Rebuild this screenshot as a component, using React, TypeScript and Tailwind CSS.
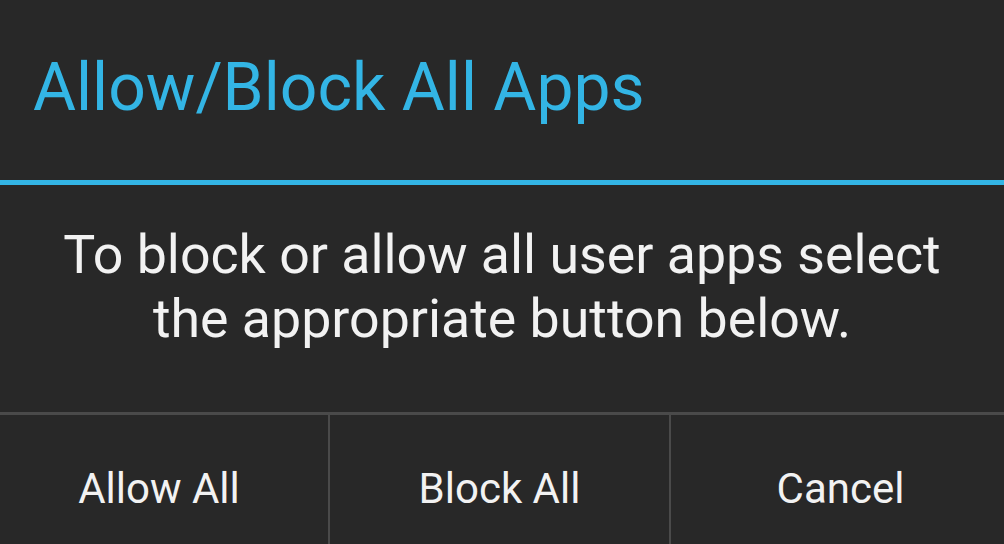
export default function App() {
  return (
    <div
      className="flex h-[544px] w-[1004px] flex-col overflow-hidden bg-[#282828]"
      style={{ fontFamily: "Roboto, 'Liberation Sans', sans-serif" }}
    >
      <div className="h-[180px] px-[33px] pt-[55px]">
        <h1 className="text-[66px] leading-none text-[#33b5e5]">Allow/Block All Apps</h1>
      </div>
      <div className="h-[5px] bg-[#33b5e5]" />
      <div className="h-[227px] px-10 pt-[38px]">
        <p className="text-center text-[53.7px] leading-[64px] text-[#f2f2f2]">
          To block or allow all user apps select the appropriate button below.
        </p>
      </div>
      <div className="h-[3px] bg-[#4a4a4a]" />
      <div className="grid flex-1 grid-cols-[328px_2px_339px_2px_1fr]">
        <button className="self-start pr-[10px] pt-[53px] text-[42px] leading-none text-[#f2f2f2]">Allow All</button>
        <div className="bg-[#4a4a4a]" />
        <button className="self-start pt-[53px] text-[42px] leading-none text-[#f2f2f2]">Block All</button>
        <div className="bg-[#4a4a4a]" />
        <button className="self-start pl-[6px] pt-[53px] text-[42px] leading-none text-[#f2f2f2]">Cancel</button>
      </div>
    </div>
  );
}
